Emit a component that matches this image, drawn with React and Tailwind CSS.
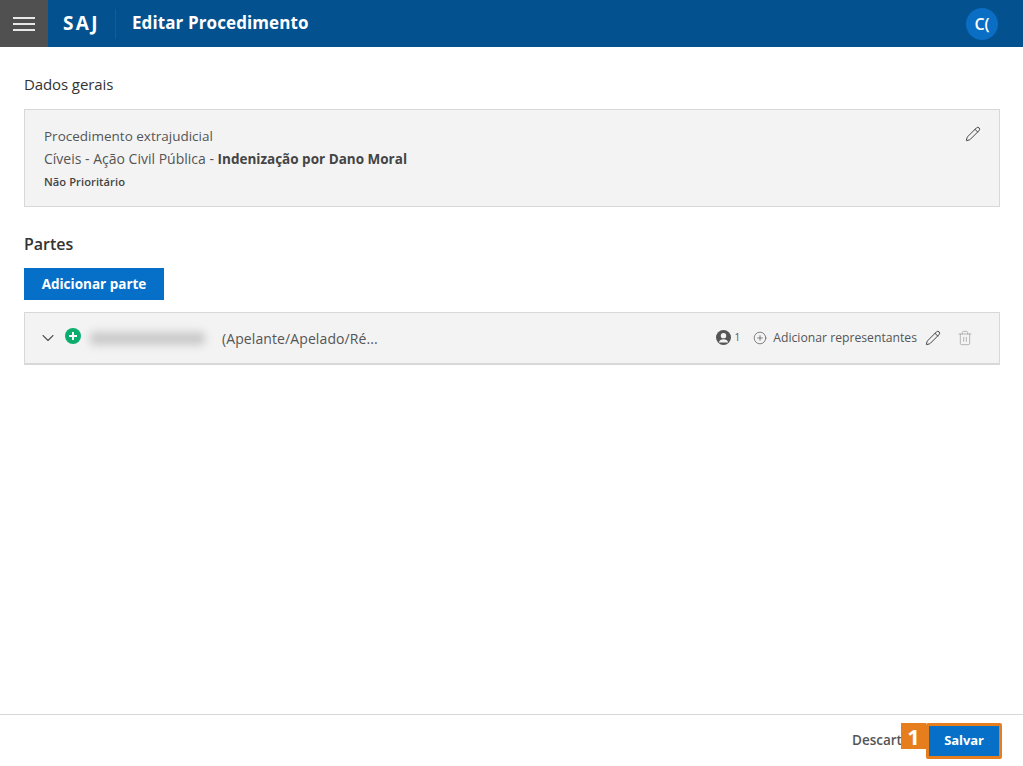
import React from 'react';
import { ChevronDown, CirclePlus, Pencil, Trash2 } from 'lucide-react';

const font = "font-['Open_Sans','Noto_Sans',sans-serif]";

function App() {
  return (
    <div className={`${font} h-[766px] w-full flex flex-col bg-white text-[#444] overflow-hidden`}>
      {/* header */}
      <header className="h-[47px] flex items-center bg-[#03528f] text-white shrink-0">
        <div className="w-12 h-full bg-[#505050] flex flex-col items-center justify-center gap-[4px]">
          <span className="block w-[22px] h-[2px] bg-[#e8e8e8]" />
          <span className="block w-[22px] h-[2px] bg-[#e8e8e8]" />
          <span className="block w-[22px] h-[2px] bg-[#e8e8e8]" />
        </div>
        <span className="ml-[15px] w-[52px] text-[19px] leading-[24px] font-bold tracking-[2.4px] -mt-[1px]">SAJ</span>
        <div className="w-px h-[30px] bg-[#0a5f9f]" />
        <h1 className="ml-4 text-[17px] leading-[24px] font-bold tracking-[0.1px] -mt-[2px]">Editar Procedimento</h1>
        <div className="ml-auto mr-[25px] w-8 h-8 rounded-full bg-[#0a6ec4] flex items-center justify-center text-[16px] font-semibold">C(</div>
      </header>

      {/* content */}
      <main className="flex-1 pl-6 pr-[23px] pt-[26px]">
        <h2 className="text-[15px] leading-[22px] font-medium text-[#333] tracking-[-0.1px]">Dados gerais</h2>
        <section className="mt-[14px] h-[98px] border border-[#d8d8d8] bg-[#f3f3f3] pl-[19px] pr-[18px] pt-[16px] flex justify-between">
          <div className="text-[#555]">
            <p className="text-[13.5px] leading-[20px]">Procedimento extrajudicial</p>
            <p className="mt-[3px] text-[14px] leading-[20px]">
              Cíveis - Ação Civil Pública - <b className="text-[13.5px] font-bold text-[#444]">Indenização por Dano Moral</b>
            </p>
            <p className="mt-[4px] text-[11.2px] leading-[18px] font-semibold text-[#444] tracking-[0.05px]">Não Prioritário</p>
          </div>
          <Pencil className="w-4 h-4 text-[#444]" strokeWidth={1.5} />
        </section>

        <h2 className="mt-[26px] text-[16px] leading-[22px] font-semibold text-[#333]">Partes</h2>
        <button className="mt-[13px] h-8 w-[140px] bg-[#0670c8] text-white text-[13.5px] font-bold">Adicionar parte</button>

        <div className="mt-[12px] h-[53px] border border-[#d8d8d8] border-b-2 bg-[#f3f3f3] flex items-center pr-[26px]">
          <ChevronDown className="ml-[13px] w-5 h-5 text-[#555]" strokeWidth={1.3} />
          <span className="relative -top-[2px] ml-[7px] w-4 h-4 rounded-full bg-[#0cae6e] flex items-center justify-center">
            <svg viewBox="0 0 10 10" className="w-[10px] h-[10px]">
              <path d="M5 1v8M1 5h8" stroke="#fff" strokeWidth="2" />
            </svg>
          </span>
          <div className="ml-[9px] w-[115px] h-[13px] rounded bg-[#c9c9c9] blur-[4px]" />
          <span className="ml-[17px] text-[14px] text-[#555] tracking-[0.1px]">(Apelante/Apelado/Ré...</span>

          <div className="ml-auto flex items-center">
            <span className="w-[15px] h-[15px] rounded-full bg-[#555] flex items-center justify-center overflow-hidden">
              <svg viewBox="0 0 16 16" className="w-[15px] h-[15px]">
                <circle cx="8" cy="6" r="2.9" fill="#f3f3f3" />
                <path d="M3 13.2c.6-2.4 2.6-3.4 5-3.4s4.4 1 5 3.4z" fill="#f3f3f3" />
              </svg>
            </span>
            <span className="ml-[4px] text-[10px] text-[#555]">1</span>
            <CirclePlus className="ml-[13px] w-[14px] h-[14px] text-[#555]" strokeWidth={1.2} />
            <span className="ml-[6px] mt-[1px] text-[12.2px] font-medium text-[#555]">Adicionar representantes</span>
            <Pencil className="ml-[8px] w-4 h-4 text-[#444]" strokeWidth={1.5} />
            <Trash2 className="ml-[16px] w-4 h-4 text-[#aaa]" strokeWidth={1.3} />
          </div>
        </div>
      </main>

      {/* footer */}
      <footer className="h-[52px] shrink-0 border-t border-[#d8d8d8] flex items-center justify-end pr-[24px]">
        <span className="text-[13.5px] font-semibold text-[#555] mr-[28px] w-[49px] whitespace-nowrap">Descartar</span>
        <div className="relative">
          <button className="h-[30px] w-[70px] bg-[#0670c8] text-white text-[13px] font-bold tracking-[-0.1px]">Salvar</button>
          {/* annotation marker */}
          <div className="absolute -inset-[3px] border-[3px] border-[#e67e1e] rounded-[2px]" />
          <div className="absolute -left-[28px] -top-[3px] w-[25px] h-[26px] bg-[#e67e1e] text-white text-[22px] leading-[26px] font-bold text-center">1</div>
        </div>
      </footer>
    </div>
  );
}

export default App;
